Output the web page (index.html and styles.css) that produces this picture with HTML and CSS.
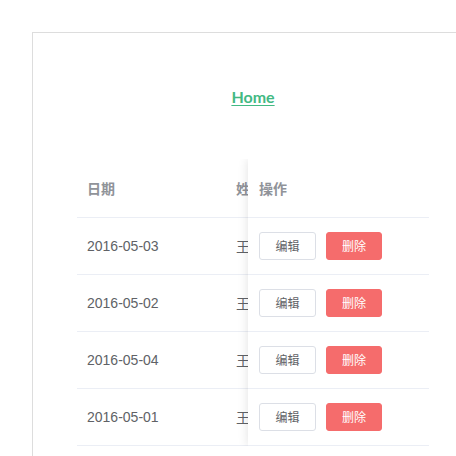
FILE: index.html
```html
<!DOCTYPE html>
<html lang="zh">
<head>
<meta charset="utf-8">
<title>Home</title>
<link rel="stylesheet" href="styles.css">
</head>
<body>
<div class="frame">
  <nav class="nav"><a class="nav-link" href="#">Home</a></nav>
  <div class="table">
    <div class="table-main">
      <div class="row head">
        <div class="cell col-date">日期</div>
        <div class="cell col-name">姓名</div>
      </div>
      <div class="row"><div class="cell col-date">2016-05-03</div><div class="cell col-name">王小虎</div></div>
      <div class="row"><div class="cell col-date">2016-05-02</div><div class="cell col-name">王小虎</div></div>
      <div class="row"><div class="cell col-date">2016-05-04</div><div class="cell col-name">王小虎</div></div>
      <div class="row"><div class="cell col-date">2016-05-01</div><div class="cell col-name">王小虎</div></div>
    </div>
    <div class="table-fixed">
      <div class="row head"><div class="cell col-op">操作</div></div>
      <div class="row"><div class="cell col-op"><button class="btn">编辑</button><button class="btn btn-danger">删除</button></div></div>
      <div class="row"><div class="cell col-op"><button class="btn">编辑</button><button class="btn btn-danger">删除</button></div></div>
      <div class="row"><div class="cell col-op"><button class="btn">编辑</button><button class="btn btn-danger">删除</button></div></div>
      <div class="row"><div class="cell col-op"><button class="btn">编辑</button><button class="btn btn-danger">删除</button></div></div>
    </div>
  </div>
</div>
</body>
</html>
```

FILE: styles.css
```css
html, body {
  margin: 0;
  padding: 0;
  background: #fff;
  overflow: hidden;
}
body {
  font-family: "Liberation Sans", "Noto Sans CJK SC", sans-serif;
  color: #606266;
}
.frame {
  margin: 32px 0 0 32px;
  width: 440px;
  height: 600px;
  border: 1px solid #ddd;
}
.nav {
  height: 126px;
  display: flex;
  align-items: center;
  justify-content: center;
}
.nav-link {
  font-family: "Lato", "Noto Sans", sans-serif;
  font-weight: 700;
  font-size: 16px;
  color: #42b983;
  text-decoration: underline;
  text-underline-offset: 2px;
}
.table {
  margin-left: 44px;
  width: 352px;
  display: flex;
}
.table-main {
  width: 171px;
  overflow: hidden;
}
.table-fixed {
  flex: 1;
  background: #fff;
  box-shadow: 0 0 10px rgba(0, 0, 0, 0.12);
  clip-path: inset(0 0 0 -14px);
}
.row {
  display: flex;
  height: 56px;
  border-bottom: 1px solid #ebeef5;
}
.row.head {
  height: 58px;
  color: #909399;
  font-weight: 700;
}
.cell {
  display: flex;
  align-items: center;
  box-sizing: border-box;
  padding-left: 10px;
  font-size: 14px;
  white-space: nowrap;
  overflow: hidden;
}
.col-date { width: 149px; flex: none; }
.col-name { width: 80px; flex: none; }
.col-op { padding-left: 11px; gap: 10px; }
.btn {
  font-family: "Noto Sans CJK SC", sans-serif;
  font-size: 12px;
  line-height: 12px;
  height: 28px;
  width: 57px;
  padding: 0;
  border: 1px solid #dcdfe6;
  border-radius: 3px;
  background: #fff;
  color: #606266;
}
.btn-danger {
  width: 56px;
  background: #f56c6c;
  border-color: #f56c6c;
  color: #fff;
}
```
